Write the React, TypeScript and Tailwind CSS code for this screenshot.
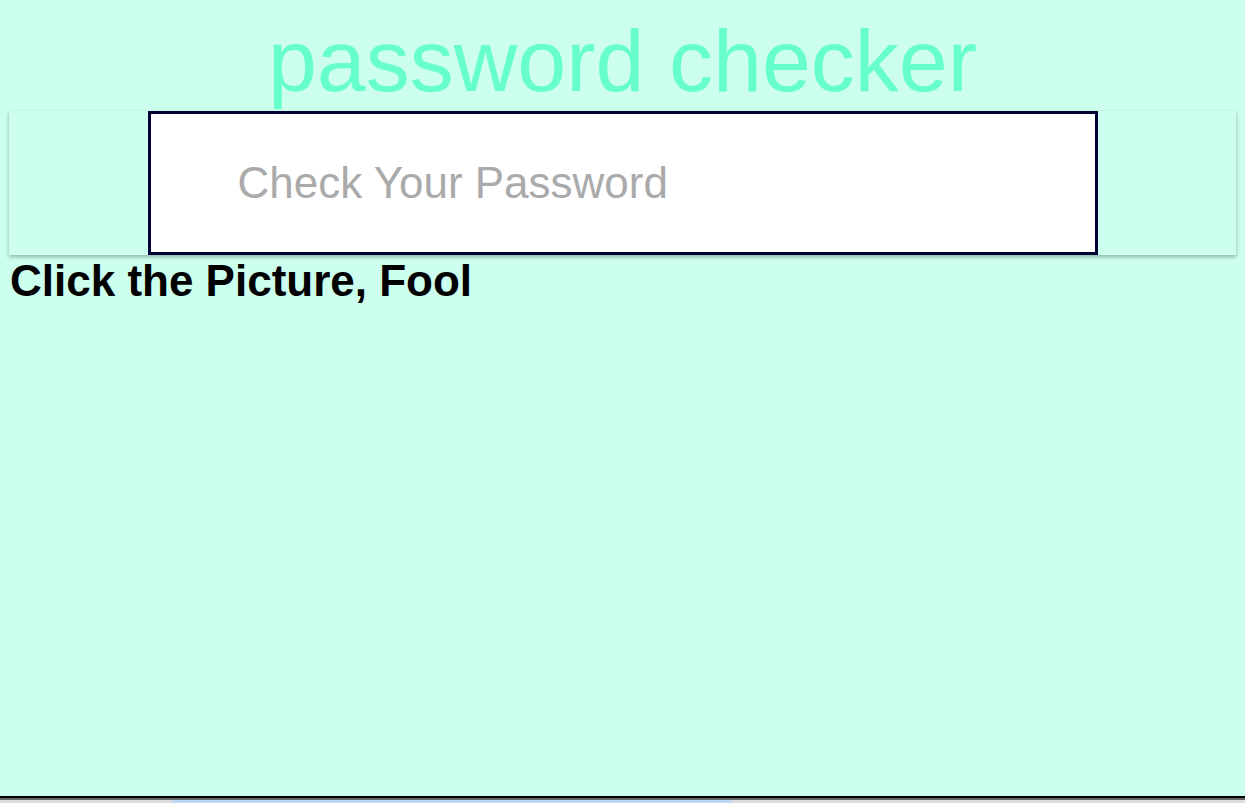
export default function App() {
    return (
        <div className="flex h-[803px] flex-col bg-[#ccffee] font-['Liberation_Sans',Arial,sans-serif]">
            <div className="flex-1">
                <h1 className="mt-[10px] text-center text-[88px] leading-[101px] text-[#66ffcc]">password checker</h1>

                <div className="mx-[9px] flex justify-center bg-[#ccffee] shadow-[0_2px_4px_rgba(0,0,0,0.3)]">
                    <input
                        type="password"
                        placeholder="Check Your Password"
                        className="h-[144px] w-[950px] border-[3px] border-[#000033] bg-white pl-[87px] font-['Liberation_Sans',Arial,sans-serif] text-[44px] text-black outline-none placeholder:text-[#aaaaaa]"
                    />
                </div>

                <h2 className="pl-[10px] text-[44px] font-bold leading-[51px] text-black">Click the Picture, Fool</h2>
            </div>

            {/* bottom edge of the captured window */}
            <div className="h-[2px] bg-black" />
            <div className="h-[2px] bg-[#666666]" />
            <div className="flex h-[3px] bg-[#dddddd]">
                <div className="w-[172px]" />
                <div className="w-[560px] bg-[#bcd8f4]" />
            </div>
        </div>
    )
}
